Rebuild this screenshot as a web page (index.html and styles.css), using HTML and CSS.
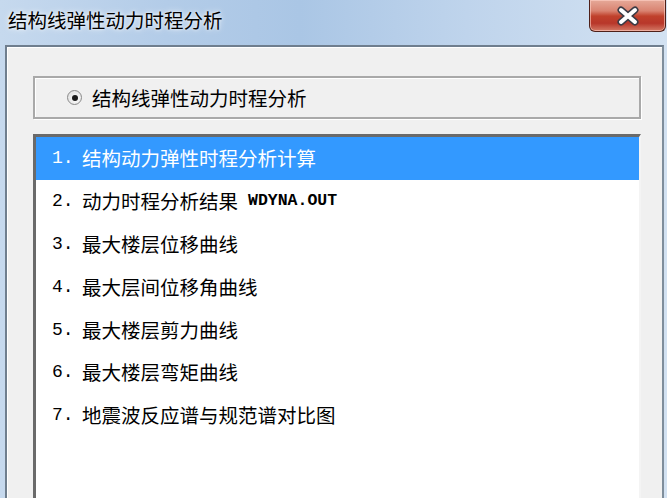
FILE: index.html
```html
<!DOCTYPE html>
<html lang="zh-CN">
<head>
<meta charset="utf-8">
<title>结构线弹性动力时程分析</title>
<link rel="stylesheet" href="styles.css">
</head>
<body>
<div class="window">
  <div class="titlebar">
    <span class="title">结构线弹性动力时程分析</span>
    <div class="close">
      <svg width="26" height="20" viewBox="0 0 26 20">
        <path d="M6 4 L20 16 M20 4 L6 16" stroke="#3b3b45" stroke-width="7" stroke-linecap="round" fill="none"/>
        <path d="M6 4 L20 16 M20 4 L6 16" stroke="#ffffff" stroke-width="4" stroke-linecap="round" fill="none"/>
      </svg>
    </div>
  </div>
  <div class="client">
    <div class="group">
      <span class="radio"><span class="dot"></span></span>
      <span class="label">结构线弹性动力时程分析</span>
    </div>
    <ul class="list">
      <li class="item selected"><span class="num">1.</span>结构动力弹性时程分析计算</li>
      <li class="item"><span class="num">2.</span>动力时程分析结果 <span class="asc">WDYNA.OUT</span></li>
      <li class="item"><span class="num">3.</span>最大楼层位移曲线</li>
      <li class="item"><span class="num">4.</span>最大层间位移角曲线</li>
      <li class="item"><span class="num">5.</span>最大楼层剪力曲线</li>
      <li class="item"><span class="num">6.</span>最大楼层弯矩曲线</li>
      <li class="item"><span class="num">7.</span>地震波反应谱与规范谱对比图</li>
    </ul>
  </div>
</div>
</body>
</html>
```

FILE: styles.css
```css
* { box-sizing: border-box; }
html, body {
  margin: 0;
  padding: 0;
  width: 667px;
  height: 498px;
  overflow: hidden;
}
body {
  background: #c4d8ee;
  font-family: "Noto Sans CJK SC", "Noto Sans", sans-serif;
  color: #000;
}
.window {
  width: 667px;
  height: 498px;
  display: flex;
  flex-direction: column;
  background: linear-gradient(90deg, #c6d9ee 0%, #b3cce8 25%, #aac6e5 45%, #bfd4ec 70%, #d3e2f2 100%);
}
.titlebar {
  height: 45px;
  display: flex;
  align-items: flex-start;
  flex-shrink: 0;
}
.title {
  margin-left: 8px;
  margin-top: 7px;
  font-size: 19.5px;
  line-height: 26px;
  color: #000;
  text-shadow: 0 0 6px rgba(255,255,255,0.9), 0 0 3px rgba(255,255,255,0.8);
}
.close {
  margin-left: auto;
  margin-right: 1px;
  width: 77px;
  height: 32px;
  border: 1px solid #4e2019;
  border-top: none;
  border-radius: 0 0 6px 6px;
  background: linear-gradient(180deg, #e6a999 0%, #d98371 35%, #c0412c 52%, #b8372a 75%, #d47a66 100%);
  box-shadow: inset 0 0 0 1px rgba(255,210,200,0.6);
  display: flex;
  align-items: center;
  justify-content: center;
}
.client {
  flex: 1;
  min-height: 0;
  display: flex;
  flex-direction: column;
  margin: 0 3px 0 5px;
  background: #f0f0f0;
  border-top: 2px solid #6f7e8e;
  border-left: 2px solid #6f7e8e;
  border-right: 2px solid #7f8e9c;
  box-shadow: inset 1px 1px #ffffff;
  padding: 29px 0 0 26px;
}
.group {
  width: 608px;
  height: 43px;
  flex-shrink: 0;
  border: 2px solid #a9a9a9;
  box-shadow: inset 1px 1px #ffffff, 1px 1px #ffffff;
  display: flex;
  align-items: center;
  padding-left: 32px;
}
.radio {
  width: 15px;
  height: 15px;
  border-radius: 50%;
  border: 1px solid #8a8a8a;
  background: radial-gradient(circle at 60% 60%, #ffffff 0%, #e4e4e4 70%, #cfcfcf 100%);
  display: flex;
  align-items: center;
  justify-content: center;
  flex-shrink: 0;
}
.dot {
  width: 6px;
  height: 6px;
  border-radius: 50%;
  background: #1a1a1a;
}
.label {
  margin-left: 10px;
  font-size: 19.5px;
  line-height: 26px;
}
.list {
  list-style: none;
  flex: 1;
  min-height: 0;
  overflow: hidden;
  margin: 15px 0 0 0;
  padding: 0;
  width: 608px;
  background: #ffffff;
  border-top: 3px solid #6a6a6a;
  border-left: 3px solid #6a6a6a;
  border-right: 2px solid #f4f4f4;
}
.item {
  height: 42.8px;
  display: flex;
  align-items: center;
  padding-left: 16px;
  font-size: 19.5px;
  line-height: 26px;
  white-space: nowrap;
}
.item.selected {
  background: #3399ff;
  color: #ffffff;
}
.num {
  display: inline-block;
  width: 30px;
  font-family: "Liberation Mono", monospace;
  font-size: 18px;
}
.asc {
  font-family: "Liberation Mono", monospace;
  font-size: 16.5px;
  font-weight: bold;
  margin-left: 10px;
}
```
